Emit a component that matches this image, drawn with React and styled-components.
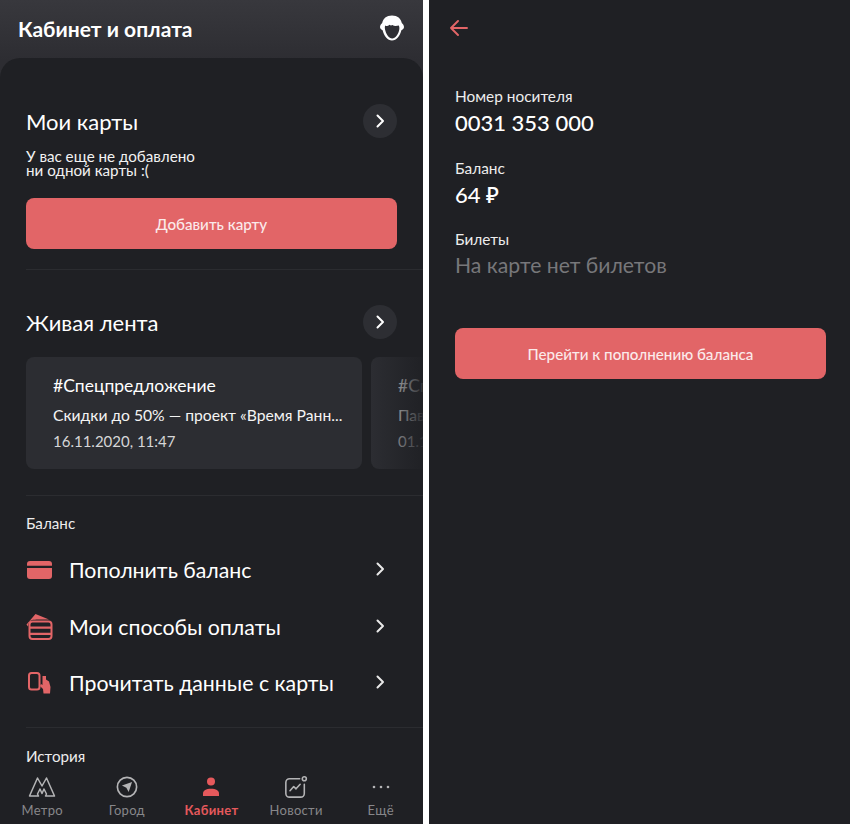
import React from 'react'
import styled, { createGlobalStyle } from 'styled-components'

const Global = createGlobalStyle`
  html, body { margin: 0; padding: 0; background: #fff; }
  * { box-sizing: border-box; }
  body { font-family: "Lato", "Noto Sans", "Open Sans", sans-serif; color: #fff; }
`

const Page = styled.div`
  width: 850px;
  height: 824px;
  display: grid;
  grid-template-columns: 423px 421px;
  justify-content: space-between;
  overflow: hidden;
  background: #fff;
`

const LeftScreen = styled.section`
  height: 824px;
  display: flex;
  flex-direction: column;
  overflow: hidden;
  background: linear-gradient(180deg, #38383d 0%, #2d2d32 60px);
`

const Header = styled.header`
  height: 58px;
  flex: none;
  display: flex;
  align-items: center;
  justify-content: space-between;
  padding: 0 18px 2px 18px;
`

const HeaderTitle = styled.h1`
  margin: 0;
  font-size: 21px;
  font-weight: 700;
  color: #fff;
`

const Sheet = styled.main`
  flex: 1;
  min-height: 0;
  background: #1f2024;
  border-radius: 20px 20px 0 0;
  padding-top: 46px;
  overflow: hidden;
`

const Section = styled.div`
  padding-left: 26px;
`

const TitleRow = styled.div`
  display: flex;
  align-items: center;
  justify-content: space-between;
  height: 34px;
  padding-right: 26px;
  margin-top: ${(p) => p.$top || 0}px;
`

const SectionTitle = styled.h2`
  margin: 0;
  font-size: 22px;
  font-weight: 400;
  color: #fff;
`

const RoundButton = styled.button`
  width: 34px;
  height: 34px;
  padding: 0;
  border: 0;
  border-radius: 50%;
  background: #2d2e33;
  color: #fff;
  display: flex;
  align-items: center;
  justify-content: center;
`

const EmptyText = styled.p`
  margin: 11px 0 21px;
  font-size: 15.2px;
  line-height: 14px;
  color: #f2f2f2;
`

const PrimaryButton = styled.button`
  display: block;
  width: 371px;
  height: 51px;
  border: 0;
  border-radius: 8px;
  background: #e26567;
  color: #fbeaea;
  font-family: inherit;
  font-size: 15.2px;
  font-weight: 500;
`

const Divider = styled.div`
  height: 1px;
  background: #2b2c30;
  margin-top: ${(p) => p.$top}px;
`

const Feed = styled.div`
  display: flex;
  gap: 9px;
  margin-top: 18px;
  overflow: hidden;
`

const FeedCard = styled.article`
  position: relative;
  flex: none;
  width: 336px;
  height: 112px;
  padding: 19px 10px 0 27px;
  border-radius: 8px;
  background: #2c2d32;
  overflow: hidden;
  white-space: nowrap;
`

const FadeOverlay = styled.div`
  position: absolute;
  inset: 0;
  background: linear-gradient(90deg, rgba(31, 32, 36, 0) 0%, #1f2024 56px);
`

const CardTag = styled.div`
  font-size: 17.5px;
  line-height: 20px;
  color: #fff;
`

const CardText = styled.div`
  margin-top: 9px;
  font-size: 15.7px;
  line-height: 20px;
  color: #f4f4f4;
`

const CardDate = styled.div`
  margin-top: 6px;
  font-size: 15px;
  line-height: 20px;
  color: #d6d6d8;
`

const GroupLabel = styled.div`
  font-size: 15.2px;
  line-height: 18px;
  color: #ededed;
  margin-top: ${(p) => p.$top}px;
`

const MenuList = styled.div`
  display: flex;
  flex-direction: column;
  margin-top: 10px;
  padding-right: 26px;
`

const MenuRow = styled.div`
  height: 56.5px;
  display: flex;
  align-items: center;
  gap: 16px;
`

const MenuIcon = styled.span`
  flex: none;
  width: 27px;
  height: 27px;
  display: flex;
  align-items: center;
  justify-content: center;
  color: #e26567;
`

const MenuLabel = styled.span`
  flex: 1;
  font-size: 21.3px;
  color: #fff;
`

const MenuChevron = styled.span`
  width: 34px;
  display: flex;
  justify-content: center;
  color: #e8e8e8;
  margin-top: -2px;
`

const TabBar = styled.nav`
  flex: none;
  height: 54px;
  display: grid;
  grid-template-columns: repeat(5, 1fr);
  background: #1f2024;
`

const Tab = styled.div`
  display: flex;
  flex-direction: column;
  align-items: center;
  padding-top: 4px;
  font-size: 13px;
  line-height: 16px;
  letter-spacing: 0.3px;
  color: ${(p) => (p.$active ? '#e5595c' : '#87878a')};
  font-weight: ${(p) => (p.$active ? 700 : 400)};
`

const TabIcon = styled.span`
  width: 28px;
  height: 26px;
  display: flex;
  align-items: center;
  justify-content: center;
  margin-bottom: 2px;
  color: ${(p) => (p.$active ? '#e5595c' : '#b4b4b6')};
`

const RightScreen = styled.section`
  height: 824px;
  background: #1f2024;
  padding: 0 24px 0 26px;
`

const BackRow = styled.div`
  height: 56px;
  display: flex;
  align-items: center;
  margin-left: -5px;
  color: #e26567;
`

const InfoList = styled.div`
  display: flex;
  flex-direction: column;
  gap: 20.5px;
  padding-top: 31px;
`

const InfoLabel = styled.div`
  font-size: 15.4px;
  line-height: 18px;
  color: #ededed;
`

const InfoValue = styled.div`
  margin-top: 2px;
  font-size: ${(p) => (p.$muted ? 21.2 : 22)}px;
  line-height: 31px;
  font-weight: ${(p) => (p.$muted ? 400 : 500)};
  color: ${(p) => (p.$muted ? '#77777a' : '#fff')};
`

const TopUpButton = styled(PrimaryButton)`
  margin-top: 47px;
`

const Chevron = () => (
  <svg width="10" height="14" viewBox="0 0 10 14" fill="none" stroke="currentColor" strokeWidth="2" strokeLinecap="round" strokeLinejoin="round">
    <path d="M2.500 1.500 L8 7 L2.500 12.500" />
  </svg>
)

const AvatarIcon = () => (
  <svg width="26" height="26" viewBox="0 0 26 26">
    <path fill="#fff" d="M13 .5c5.500 0 9 3 9.800 7.500.8.800 2.200 2 2.200 4 0 1.800-1.500 2.800-2.600 3.200C21 20.800 17.500 25.500 13 25.500S5 20.800 3.600 15.200C2.500 14.800 1 13.800 1 12c0-2 1.400-3.200 2.200-4C4 3.500 7.500.5 13 .5z" />
    <path fill="#2f2f34" d="M6.200 10.500c1.600 1 3 .5 4.200-.8 1 1.100 2.200.9 3 .3 1.500 1.200 3.800 1.200 6.400.5.800 1.500.7 3.500.2 5.300-1 3.800-3.500 7.700-6.800 7.700s-5.800-3.900-6.800-7.700c-.5-1.800-.9-3.800-.2-5.300z" />
  </svg>
)

const CardFillIcon = () => (
  <svg width="25" height="18" viewBox="0 0 25 18" fill="currentColor">
    <path d="M3 0h19a3 3 0 0 1 3 3v1.800H0V3a3 3 0 0 1 3-3z" />
    <path d="M0 7h25v8a3 3 0 0 1-3 3H3a3 3 0 0 1-3-3z" />
  </svg>
)

const CardsIcon = () => (
  <svg width="27" height="27" viewBox="0 0 27 27" fill="none">
    <path fill="currentColor" d="M.5 11.500 L9.500 1 L23 6.500 C15 6.500 9 6.500 6 7 C3.500 7.500 2.500 9.500 2 13.500z" />
    <path stroke="currentColor" strokeWidth="2" d="M6.500 8.500h16a3 3 0 0 1 3 3v11.500a3 3 0 0 1-3 3h-16a3 3 0 0 1-3-3V11.500a3 3 0 0 1 3-3z" />
    <path fill="currentColor" d="M3.500 13.500h22v2.200h-22zM3.500 19.800h22v2.200h-22z" />
  </svg>
)

const PhoneHandIcon = () => (
  <svg width="25" height="22" viewBox="0 0 25 22" fill="none">
    <rect x="2" y="1" width="10.500" height="16.500" rx="2.500" stroke="currentColor" strokeWidth="2" />
    <path fill="currentColor" d="M15.500 4h3.500v3.500l3 2 1.500 5.500-.5 6.500h-6.500l-.5-4.500-3-3 1-2 1.500 1z" />
  </svg>
)

const MetroIcon = () => (
  <svg width="28" height="24" viewBox="0 0 28 24" fill="none" stroke="currentColor" strokeWidth="1.500" strokeLinejoin="round">
    <path d="M1.500 21 L9.500 3 L14 11 L18.500 3 L26.500 21 H17.500 L18.500 19 L16 14 L14 18.500 L12 14 L9.500 19 L10.500 21 Z" />
  </svg>
)

const CompassIcon = () => (
  <svg width="22" height="22" viewBox="0 0 24 24">
    <circle cx="12" cy="12" r="10.500" fill="none" stroke="currentColor" strokeWidth="1.800" />
    <path fill="currentColor" d="M17.500 6.500 L13.800 17.500 L11.300 12.700 L6.500 10.300z" />
  </svg>
)

const PersonIcon = () => (
  <svg width="24" height="24" viewBox="0 0 24 24" fill="currentColor">
    <circle cx="12" cy="6.500" r="4" />
    <path d="M4 21v-2.500c0-3 3-4.800 8-4.800s8 1.800 8 4.800V21z" />
  </svg>
)

const NewsIcon = () => (
  <svg width="24" height="24" viewBox="0 0 26 26" fill="none" stroke="currentColor" strokeWidth="1.700" strokeLinecap="round" strokeLinejoin="round">
    <path d="M17 4H6a4 4 0 0 0-4 4v12a4 4 0 0 0 4 4h12a4 4 0 0 0 4-4V10" />
    <circle cx="22" cy="4" r="2.200" />
    <path d="M6.500 17 L10.500 12.500 L13 15 L17.500 10" />
  </svg>
)

const DotsIcon = () => (
  <svg width="20" height="4" viewBox="0 0 20 4" fill="currentColor">
    <circle cx="3" cy="2" r="1.300" />
    <circle cx="10" cy="2" r="1.300" />
    <circle cx="17" cy="2" r="1.300" />
  </svg>
)

const BackArrow = () => (
  <svg width="18" height="16" viewBox="0 0 18 16" fill="none" stroke="currentColor" strokeWidth="1.900" strokeLinecap="round" strokeLinejoin="round">
    <path d="M8 1 L1 8 L8 15 M1 8 H17" />
  </svg>
)

const menu = [
  { label: 'Пополнить баланс', icon: <CardFillIcon /> },
  { label: 'Мои способы оплаты', icon: <CardsIcon /> },
  { label: 'Прочитать данные с карты', icon: <PhoneHandIcon /> },
]

const tabs = [
  { label: 'Метро', icon: <MetroIcon /> },
  { label: 'Город', icon: <CompassIcon /> },
  { label: 'Кабинет', icon: <PersonIcon />, active: true },
  { label: 'Новости', icon: <NewsIcon /> },
  { label: 'Ещё', icon: <DotsIcon /> },
]

export default function App() {
  return (
    <Page>
      <Global />
      <LeftScreen>
        <Header>
          <HeaderTitle>Кабинет и оплата</HeaderTitle>
          <AvatarIcon />
        </Header>
        <Sheet>
          <Section>
            <TitleRow>
              <SectionTitle>Мои карты</SectionTitle>
              <RoundButton><Chevron /></RoundButton>
            </TitleRow>
            <EmptyText>У вас еще не добавлено<br />ни одной карты :(</EmptyText>
            <PrimaryButton>Добавить карту</PrimaryButton>
            <Divider $top={20} />
          </Section>
          <Section>
            <TitleRow $top={35}>
              <SectionTitle>Живая лента</SectionTitle>
              <RoundButton><Chevron /></RoundButton>
            </TitleRow>
            <Feed>
              <FeedCard>
                <CardTag>#Спецпредложение</CardTag>
                <CardText>Скидки до 50% — проект «Время Ранн...</CardText>
                <CardDate>16.11.2020, 11:47</CardDate>
              </FeedCard>
              <FeedCard>
                <CardTag>#Спецпредложение</CardTag>
                <CardText>Павелецкая</CardText>
                <CardDate>01.11.2020</CardDate>
                <FadeOverlay />
              </FeedCard>
            </Feed>
            <Divider $top={26} />
          </Section>
          <Section>
            <GroupLabel $top={18}>Баланс</GroupLabel>
            <MenuList>
              {menu.map((item) => (
                <MenuRow key={item.label}>
                  <MenuIcon>{item.icon}</MenuIcon>
                  <MenuLabel>{item.label}</MenuLabel>
                  <MenuChevron><Chevron /></MenuChevron>
                </MenuRow>
              ))}
            </MenuList>
            <Divider $top={15} />
            <GroupLabel $top={19}>История</GroupLabel>
          </Section>
        </Sheet>
        <TabBar>
          {tabs.map((tab) => (
            <Tab key={tab.label} $active={tab.active}>
              <TabIcon $active={tab.active}>{tab.icon}</TabIcon>
              {tab.label}
            </Tab>
          ))}
        </TabBar>
      </LeftScreen>
      <RightScreen>
        <BackRow><BackArrow /></BackRow>
        <InfoList>
          <div>
            <InfoLabel>Номер носителя</InfoLabel>
            <InfoValue>0031 353 000</InfoValue>
          </div>
          <div>
            <InfoLabel>Баланс</InfoLabel>
            <InfoValue>64 ₽</InfoValue>
          </div>
          <div>
            <InfoLabel>Билеты</InfoLabel>
            <InfoValue $muted>На карте нет билетов</InfoValue>
          </div>
        </InfoList>
        <TopUpButton>Перейти к пополнению баланса</TopUpButton>
      </RightScreen>
    </Page>
  )
}
